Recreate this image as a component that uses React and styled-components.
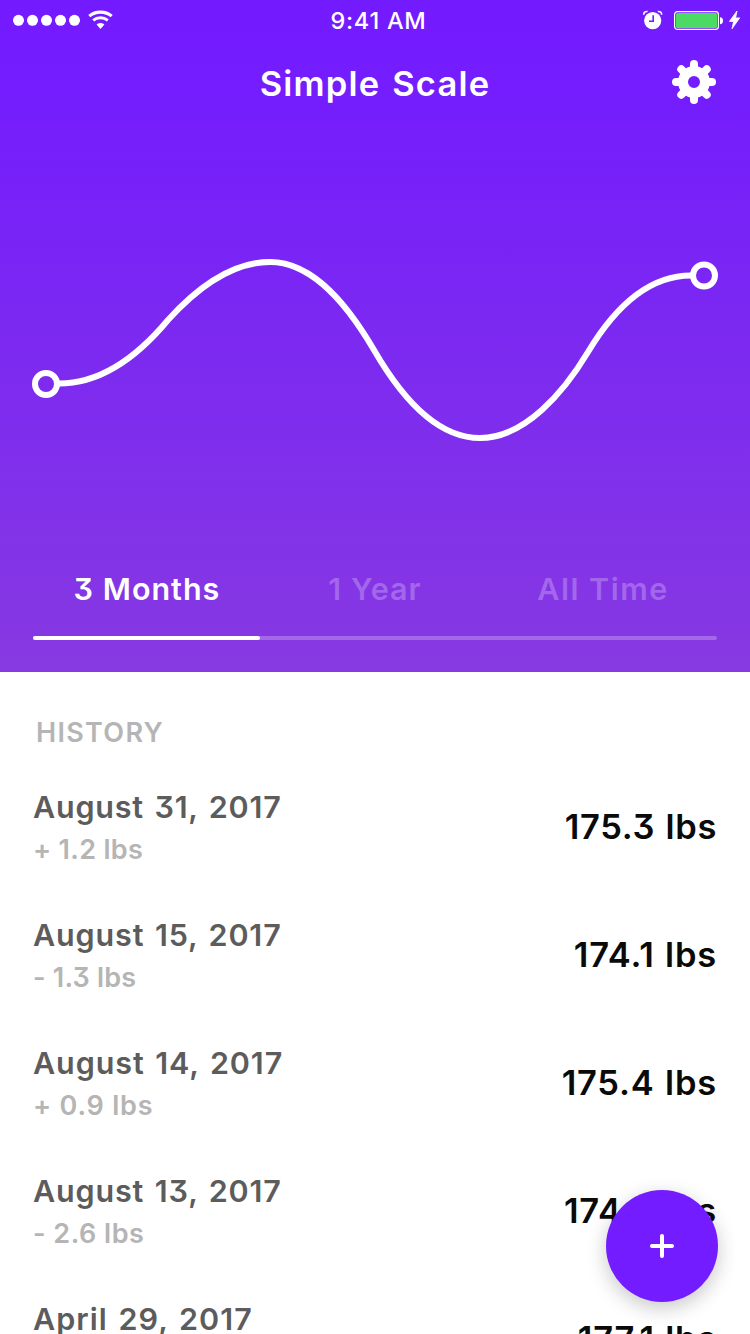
import React from "react";
import styled, { createGlobalStyle } from "styled-components";

const GlobalStyle = createGlobalStyle`
  * { box-sizing: border-box; }
  body {
    margin: 0;
    background: #fff;
    overflow: hidden;
    font-family: Inter, "Liberation Sans", sans-serif;
    font-weight: 600;
    font-feature-settings: "cv09";
  }
`;

const Screen = styled.div`
  position: relative;
  width: 750px;
  height: 1334px;
  overflow: hidden;
  background: #fff;
`;

const Header = styled.header`
  display: flex;
  flex-direction: column;
  height: 672px;
  background: linear-gradient(180deg, #731bff 0%, #741dfd 14%, #8739e1 100%);
  color: #fff;
`;

const StatusBar = styled.div`
  display: grid;
  grid-template-columns: 1fr auto 1fr;
  align-items: center;
  height: 41px;
  padding: 0 9px 0 13px;
`;

const StatusGroup = styled.div`
  display: flex;
  align-items: center;
  justify-content: ${(p) => (p.$end ? "flex-end" : "flex-start")};
  padding-bottom: 1px;

  svg { flex: none; }
`;

const Time = styled.span`
  padding-left: 3px;
  font-size: 23.5px;
  font-weight: 500;
  line-height: 41px;
  letter-spacing: 0.75px;
  white-space: nowrap;
`;

const NavBar = styled.nav`
  display: grid;
  grid-template-columns: 44px 1fr 44px;
  align-items: center;
  height: 82px;
  padding: 0 34px;
`;

const Title = styled.h1`
  grid-column: 2;
  margin: 0;
  padding-top: 3px;
  text-align: center;
  font-size: 34.5px;
  line-height: 44px;
  font-weight: 600;
  letter-spacing: ${(p) => p.$tracking}px;
  word-spacing: 2px;
  white-space: nowrap;
`;

const IconButton = styled.button`
  display: flex;
  padding: 0;
  border: 0;
  background: none;
  color: inherit;
`;

const Chart = styled.svg`
  display: block;
  flex: 1;
  width: 750px;
`;

const Tabs = styled.div`
  display: grid;
  grid-template-columns: repeat(3, 1fr);
  margin: 0 33px;
`;

const Tab = styled.button`
  height: 94px;
  padding: 0;
  border: 0;
  background: none;
  font: inherit;
  font-size: 30.5px;
  line-height: 94px;
  letter-spacing: ${(p) => p.$tracking}px;
  color: ${(p) => (p.$active ? "#fff" : "rgba(255, 255, 255, 0.25)")};
  white-space: nowrap;
`;

const Track = styled.div`
  height: 4px;
  margin: 0 33px 32px;
  border-radius: 2px;
  background: rgba(255, 255, 255, 0.25);
`;

const TrackFill = styled.div`
  width: 227px;
  height: 4px;
  border-radius: 2px;
  background: #fff;
`;

const HistoryTitle = styled.h2`
  margin: 0;
  padding: 41px 0 11px 36px;
  font-size: 27px;
  line-height: 40px;
  font-weight: 600;
  letter-spacing: ${(p) => p.$tracking}px;
  color: #b5b5b5;
`;

const Entry = styled.div`
  display: flex;
  align-items: center;
  justify-content: space-between;
  height: 128px;
  padding: 0 33px;
`;

const EntryInfo = styled.div`
  display: flex;
  flex-direction: column;
`;

const EntryDate = styled.span`
  font-size: 30.5px;
  line-height: 42px;
  letter-spacing: ${(p) => p.$tracking}px;
  word-spacing: 2px;
  color: #5c5c5c;
`;

const EntryDelta = styled.span`
  padding-top: 1px;
  margin-bottom: -1px;
  font-size: 27px;
  line-height: 42px;
  letter-spacing: ${(p) => p.$tracking}px;
  color: #b5b5b5;
`;

const EntryWeight = styled.span`
  padding-bottom: 2px;
  font-size: 34.5px;
  line-height: 44px;
  letter-spacing: ${(p) => p.$tracking}px;
  word-spacing: 1px;
  color: #0a0a0a;
`;

const AddButton = styled.button`
  position: absolute;
  right: 32px;
  bottom: 32px;
  display: flex;
  align-items: center;
  justify-content: center;
  width: 112px;
  height: 112px;
  padding: 0;
  border: 0;
  border-radius: 50%;
  background: #731cff;
  box-shadow: 0 6px 20px rgba(0, 0, 0, 0.22);
`;

const SignalDots = () => (
  <svg width="68" height="12" viewBox="0 0 68 12" fill="#fff">
    {[0, 1, 2, 3, 4].map((i) => (
      <circle key={i} cx={5.5 + i * 14} cy="6.3" r="5.5" />
    ))}
  </svg>
);

const WifiIcon = () => (
  <svg width="26" height="20" viewBox="0 0 26 20" fill="none" stroke="#fff" style={{ marginLeft: 7 }}>
    <path d="M1.3 6.2C7.5 0.8 17.5 0.8 23.7 6.2" strokeWidth="3.1" />
    <path d="M5.2 10.4C9.3 7 15.7 7 19.8 10.4" strokeWidth="3" />
    <path d="M12.5 18.9L8.6 14.6C10.9 12.6 14.1 12.6 16.4 14.6Z" fill="#fff" stroke="none" />
  </svg>
);

const AlarmIcon = () => (
  <svg width="20" height="20" viewBox="0 0 20 20" style={{ marginRight: 11 }}>
    <circle cx="9.7" cy="10.6" r="8.6" fill="#fff" />
    <path d="M0.8 4.8C0.6 2.4 2.2 1.2 4.6 1.5" fill="none" stroke="#fff" strokeWidth="1.6" />
    <path d="M18.6 4.8C18.8 2.4 17.2 1.2 14.8 1.5" fill="none" stroke="#fff" strokeWidth="1.6" />
    <path d="M10.2 5.2V11.2H6" fill="none" stroke="#731bff" strokeWidth="1.6" />
  </svg>
);

const BatteryIcon = () => (
  <svg width="50" height="20" viewBox="0 0 50 20" style={{ marginRight: 5 }}>
    <rect x="0.6" y="1.6" width="43.8" height="17.8" rx="2.8" fill="none" stroke="#fff" strokeWidth="1.2" />
    <rect x="2" y="3" width="41" height="15" rx="1.5" fill="#4cd964" />
    <path d="M46 7.2V14.2C48 14.2 49 12.7 49 10.7S48 7.2 46 7.2Z" fill="#fff" />
  </svg>
);

const BoltIcon = () => (
  <svg width="12" height="20" viewBox="0 0 12 20" fill="#fff">
    <path d="M8 1L0.4 11.4H4.6L3 18.8L10.7 7.9H6.6Z" stroke="#fff" strokeWidth="0.8" />
  </svg>
);

const GearIcon = () => (
  <svg width="44" height="44" viewBox="-22 -22 44 44" fill="none" stroke="currentColor">
    <circle r="11" strokeWidth="10" />
    {[0, 45, 90, 135, 180, 225, 270, 315].map((a) => (
      <path key={a} d="M0 -13V-18" strokeWidth="8" strokeLinecap="round" transform={`rotate(${a})`} />
    ))}
  </svg>
);

const PlusIcon = () => (
  <svg width="24" height="24" viewBox="0 0 24 24" stroke="#fff" strokeWidth="4" strokeLinecap="round">
    <path d="M12 2V22M2 12H22" />
  </svg>
);

const tabs = [
  { label: "3 Months", tracking: 1, active: true },
  { label: "1 Year", tracking: 1 },
  { label: "All Time", tracking: 1.5 },
];

const entries = [
  { date: "August 31, 2017", delta: "+ 1.2 lbs", weight: "175.3 lbs", t: [0.8, 0.3, 0.65] },
  { date: "August 15, 2017", delta: "- 1.3 lbs", weight: "174.1 lbs", t: [0.87, 0.2, 0.8] },
  { date: "August 14, 2017", delta: "+ 0.9 lbs", weight: "175.4 lbs", t: [0.92, 0.8, 0.8] },
  { date: "August 13, 2017", delta: "- 2.6 lbs", weight: "174.5 lbs", t: [0.85, 0.5, 0.8] },
  { date: "April 29, 2017", delta: "- 0.4 lbs", weight: "177.1 lbs", t: [1.03, 0.5, 0.75] },
];

export default function App() {
  return (
    <Screen>
      <GlobalStyle />
      <Header>
        <StatusBar>
          <StatusGroup>
            <SignalDots />
            <WifiIcon />
          </StatusGroup>
          <Time>9:41 AM</Time>
          <StatusGroup $end>
            <AlarmIcon />
            <BatteryIcon />
            <BoltIcon />
          </StatusGroup>
        </StatusBar>
        <NavBar>
          <Title $tracking={1.2}>Simple Scale</Title>
          <IconButton aria-label="Settings">
            <GearIcon />
          </IconButton>
        </NavBar>
        <Chart viewBox="0 123 750 419" fill="none" stroke="#fff" strokeWidth="6">
          <path d="M59 383.5C105 383.5 143 350 168 320C197 288 231 262 270 262C315 262 350 309 374 350C400 395 435 438 480 438C525 438 564 392 588 352C612 312 645 275.5 691 275.5" />
          <circle cx="46" cy="384" r="11" />
          <circle cx="704" cy="275.5" r="11" />
        </Chart>
        <Tabs>
          {tabs.map((t) => (
            <Tab key={t.label} $active={t.active} $tracking={t.tracking}>
              {t.label}
            </Tab>
          ))}
        </Tabs>
        <Track>
          <TrackFill />
        </Track>
      </Header>
      <HistoryTitle $tracking={1.3}>HISTORY</HistoryTitle>
      {entries.map((e) => (
        <Entry key={e.date}>
          <EntryInfo>
            <EntryDate $tracking={e.t[0]}>{e.date}</EntryDate>
            <EntryDelta $tracking={e.t[1]}>{e.delta}</EntryDelta>
          </EntryInfo>
          <EntryWeight $tracking={e.t[2]}>{e.weight}</EntryWeight>
        </Entry>
      ))}
      <AddButton aria-label="Add entry">
        <PlusIcon />
      </AddButton>
    </Screen>
  );
}
